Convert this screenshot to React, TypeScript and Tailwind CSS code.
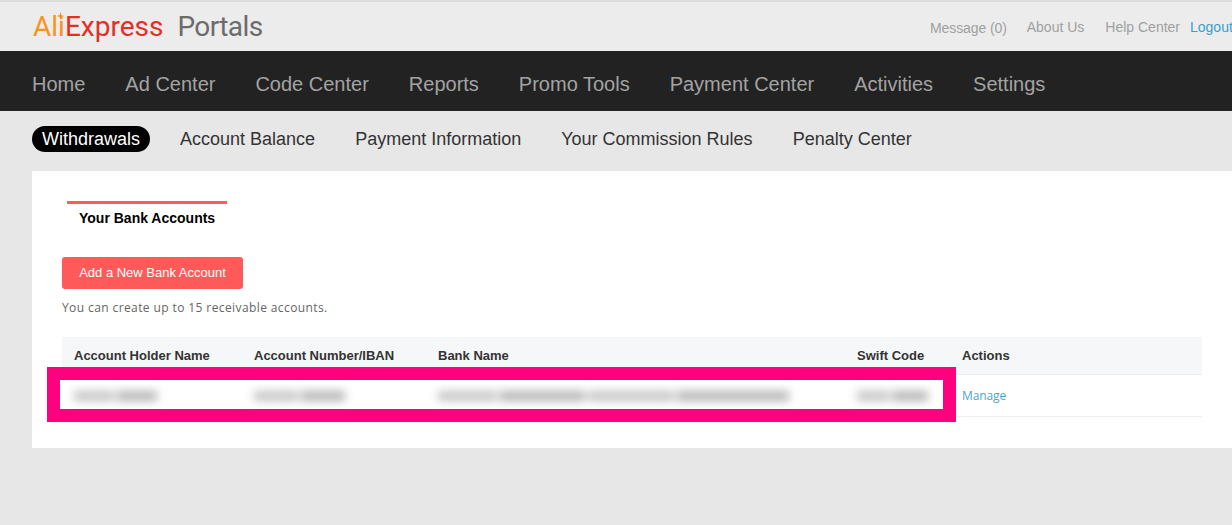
import React from "react";

const navItems = ["Home", "Ad Center", "Code Center", "Reports", "Promo Tools", "Payment Center", "Activities", "Settings"];
const subItems = ["Account Balance", "Payment Information", "Your Commission Rules", "Penalty Center"];
const rowGrid = "grid grid-cols-[180px_184px_419px_106px_1fr] pl-3";

// blurred-out value in the table row, made of a few word-like pieces
const Smudge = ({ parts }: { parts: number[] }) => (
  <div className="flex items-center gap-[3px] blur-[5px]">
    {parts.map((w, i) => (
      <div key={i} className={`h-[10px] ${i % 2 ? "bg-[#b4b4b4]" : "bg-[#c4c4c4]"}`} style={{ width: w }} />
    ))}
  </div>
);

export default function App() {
  return (
    <div className="h-[525px] overflow-hidden bg-[#e7e7e7] font-['Liberation_Sans',Arial,sans-serif]">
      {/* Top bar */}
      <div className="h-[51px] bg-[#ececec] border-t-2 border-[#dcdcdc] flex items-center justify-between pl-[33px]">
        <div className="relative flex items-baseline pt-[1px] font-['Roboto',sans-serif] text-[28px] leading-none">
          <span className="text-[#f7941d]">Ali</span>
          <span className="text-[#e62e24]">Express</span>
          <span className="ml-[14px] text-[#6b6b6b] tracking-[-0.6px]">Portals</span>
          <svg className="absolute left-[24px] top-[0px]" width="7" height="8" viewBox="0 0 7 8">
            <path d="M3.5 0 L4.4 3.1 L7 4 L4.4 4.9 L3.5 8 L2.6 4.9 L0 4 L2.6 3.1 Z" fill="#f7941d" />
          </svg>
        </div>
        <div className="flex items-center text-sm text-[#a0a0a0] whitespace-nowrap w-[302px] shrink-0 overflow-hidden">
          <span className="pt-[2px] tracking-[-0.1px]">Message (0)</span>
          <span className="ml-[20px]">About Us</span>
          <span className="ml-[21px]">Help Center</span>
          <span className="ml-[10px] text-[#3a9fcb]">Logout</span>
        </div>
      </div>

      {/* Main nav */}
      <div className="h-[60px] bg-[#222222] flex items-center gap-[40px] pl-[32px] pt-[6px] text-[20px] text-[#a3a3a3]">
        {navItems.map((item) => (
          <span key={item}>{item}</span>
        ))}
      </div>

      {/* Sub nav */}
      <div className="h-[60px] flex items-start pt-[15px] pl-[32px] gap-[20px] text-lg leading-[26px] text-[#333333]">
        <span className="h-[26px] rounded-full bg-black px-[10px] text-white">Withdrawals</span>
        {subItems.map((item) => (
          <span key={item} className="px-[10px]">{item}</span>
        ))}
      </div>

      {/* Card */}
      <div className="ml-[32px] h-[277px] bg-white pt-[30px]">
        <div className="ml-[35px] w-[160px] h-[34px] border-t-[3px] border-[#ff5a5a] pl-[12px] pt-[5px] text-sm font-bold leading-[18px] text-black">
          Your Bank Accounts
        </div>
        <div className="ml-[30px] mt-[22px]">
          <button className="block w-[181px] h-[32px] rounded-[3px] bg-[#ff5a5a] text-[13px] text-white">
            Add a New Bank Account
          </button>
          <p className="mt-[10px] text-xs leading-[17px] tracking-[0.4px] text-[#666666] font-['Open_Sans',sans-serif]">
            You can create up to 15 receivable accounts.
          </p>
        </div>

        {/* Table */}
        <div className="relative ml-[30px] mt-[21px] w-[1140px]">
          <div className={`${rowGrid} h-[38px] items-center bg-[#f5f7f9] border-b border-[#eeeeee] text-[13px] font-bold text-[#333333]`}>
            <span>Account Holder Name</span>
            <span>Account Number/IBAN</span>
            <span>Bank Name</span>
            <span>Swift Code</span>
            <span className="ml-[-1px]">Actions</span>
          </div>
          <div className={`${rowGrid} h-[42px] items-center border-b border-[#eeeeee]`}>
            <Smudge parts={[40, 40]} />
            <Smudge parts={[44, 44]} />
            <Smudge parts={[58, 86, 86, 112]} />
            <Smudge parts={[32, 36]} />
            <span className="ml-[-1px] text-xs text-[#4ca5d0] tracking-[-0.1px] font-['Open_Sans',sans-serif]">Manage</span>
          </div>
          {/* Highlight drawn over the row */}
          <div className="absolute left-[-15px] top-[30px] w-[909px] h-[55px] border-[13px] border-[#ff007f] pointer-events-none" />
        </div>
      </div>
    </div>
  );
}
